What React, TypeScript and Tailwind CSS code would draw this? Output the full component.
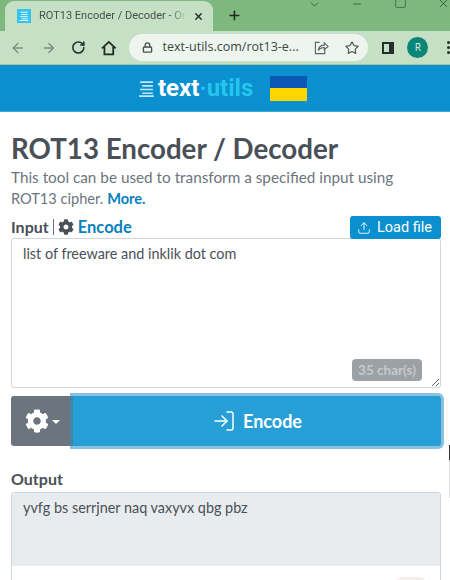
import { ArrowLeft, ArrowRight, RotateCw, Lock, Star, Plus, X, ChevronDown, Minus, Square, Upload, LogIn } from "lucide-react";
import { FaCog } from "react-icons/fa";

const Lines = ({ className }: { className: string }) => (
  <svg viewBox="0 0 16 16" className={className} fill="none" stroke="currentColor" strokeWidth="1.5">
    <path d="M2 2h12M4 5.500h10M2 9h12M4 12.500h10M1 15.200h14" />
  </svg>
);

const ShareIcon = () => (
  <svg viewBox="0 0 16 16" className="w-[15px] h-[15px]" fill="none" stroke="#5f6368" strokeWidth="1.2">
    <path d="M6 2.500H1.500v12h10V10" />
    <path d="M4.500 11c.5-3.500 3-5.500 6.500-5.500V3l4 3.800-4 3.600V8c-2.500 0-5 1-6.500 3z" />
  </svg>
);

const HomeIcon = () => (
  <svg viewBox="0 0 16 16" className="ml-[15px] w-[16px] h-[16px]" fill="none" stroke="#1f2823" strokeWidth="1.800" strokeLinejoin="miter">
    <path d="M1 8.500 8 1.800l7 6.700" />
    <path d="M3.500 7v7.600h9V7" />
  </svg>
);

const App = () => {
  return (
    <div className="w-[450px] h-[580px] overflow-hidden bg-white relative font-['Lato',sans-serif] text-[#495057]">
      {/* Tab strip */}
      <div className="h-[31px] bg-[#7db97c] flex items-end pl-[5px] font-['Roboto',sans-serif]">
        <div className="w-[210px] h-[30px] bg-[#c6e0c5] rounded-t-[9px] flex items-center pl-[12px] pr-[9px]">
          <div className="w-[14px] h-[14px] bg-[#35c4f0] text-[#e8f8ff] flex items-center justify-center shrink-0">
            <Lines className="w-[10px] h-[10px]" />
          </div>
          <span className="ml-[8px] text-[11px] text-[#45524a] whitespace-nowrap overflow-hidden w-[148px] [mask-image:linear-gradient(to_right,black_88%,transparent)]">ROT13 Encoder / Decoder - Online</span>
          <X size={11} strokeWidth={3} className="ml-auto text-[#22282a]" />
        </div>
        <Plus size={15} strokeWidth={2.500} className="ml-[14px] mb-[8px] text-[#1f2a22]" />
        <div className="flex-1 self-start flex items-start text-[#37473a]">
          <ChevronDown size={13} strokeWidth={1.500} className="ml-[66px] -mt-[2px]" />
          <Minus size={12} strokeWidth={1.500} className="ml-[30px] -mt-[2px]" />
          <Square size={13} strokeWidth={1.200} className="ml-[31px] -mt-[4px]" />
          <X size={13} strokeWidth={1.500} className="ml-[30px] -mt-[3px] shrink-0" />
        </div>
      </div>

      {/* Toolbar */}
      <div className="h-[34px] bg-[#c6e0c5] border-b border-[#a5c4a5] flex items-center pl-[10px] font-['Open_Sans',sans-serif]">
        <ArrowLeft size={16} strokeWidth={2} className="text-[#7f8c84]" />
        <ArrowRight size={16} strokeWidth={2} className="ml-[15px] text-[#7f8c84]" />
        <RotateCw size={15} strokeWidth={2.500} className="ml-[15px] text-[#26302a]" />
        <HomeIcon />
        <div className="ml-[12px] w-[239px] h-[27px] rounded-full bg-[#edf5ee] flex items-center pl-[13px] shrink-0">
          <Lock size={11} strokeWidth={3} className="text-[#4a5350]" />
          <span className="ml-[10px] text-[12.500px] text-[#3c4743] whitespace-nowrap">text-utils.com/rot13-e...</span>
          <div className="ml-[15px]"><ShareIcon /></div>
          <Star size={14} strokeWidth={2} className="ml-[16px] text-[#4a5350]" />
        </div>
        <div className="ml-[14px] w-[13px] h-[12px] border-2 border-[#26302a] border-r-[5px]" />
        <div className="ml-[13px] w-[21px] h-[21px] rounded-full bg-[#0b8577] text-[#dff3ee] text-[10px] flex items-center justify-center">R</div>
        <div className="ml-[19px] flex flex-col gap-[2px]">
          <span className="w-[3px] h-[3px] rounded-full bg-[#26302a]" />
          <span className="w-[3px] h-[3px] rounded-full bg-[#26302a]" />
          <span className="w-[3px] h-[3px] rounded-full bg-[#26302a]" />
        </div>
      </div>

      {/* Site header */}
      <div className="h-[47px] bg-[#0a8fcf] border-b border-[#3ba8dc] flex items-center pl-[138px]">
        <Lines className="w-[17px] h-[17px] text-[#c5e6f5]" />
        <span className="ml-[3px] font-['Roboto',sans-serif] font-bold text-[24px] text-white">
          text<span className="text-[#24c6ee]">·utils</span>
        </span>
        <div className="ml-[17px] w-[37px] h-[25px] flex flex-col">
          <div className="flex-1 bg-[#0a57b5]" />
          <div className="flex-1 bg-[#ffd500]" />
        </div>
      </div>

      {/* Page */}
      <div className="pl-[11px] pr-[9px]">
        <h1 className="mt-[19px] text-[27.700px] leading-[36px] font-bold text-[#495057]">ROT13 Encoder / Decoder</h1>
        <p className="text-[15.300px] leading-[21px] text-[#6c757d]">
          This tool can be used to transform a specified input using{" "}
          <span className="text-[14.600px]">ROT13 cipher.</span>{" "}
          <span className="text-[14.600px] font-bold text-[#0a7fbd]">More.</span>
        </p>

        <div className="mt-[7px] flex items-end h-[22px]">
          <span className="font-bold text-[16px] leading-[22px]">Input</span>
          <span className="mx-[4px] w-px h-[16px] bg-[#6c757d] mb-[3px]" />
          <FaCog className="w-[16px] h-[16px] mb-[3px] text-[#495057]" />
          <span className="ml-[4px] font-bold text-[16.500px] leading-[22px] text-[#0a7fbd]">Encode</span>
          <button className="ml-auto w-[91px] h-[23px] -mb-[1px] rounded-[3px] bg-[#0a8fcf] text-white text-[14.500px] flex items-center justify-center pr-[2px] font-['Roboto',sans-serif] relative z-10">
            <Upload size={14} strokeWidth={1.500} />
            <span className="ml-[6px]">Load file</span>
          </button>
        </div>

        <div className="relative h-[150px]">
          <textarea
            readOnly
            defaultValue="list of freeware and inklik dot com"
            className="block w-full h-full resize-y bg-white border border-[#ced4da] rounded-[3px] px-[11px] py-[5px] text-[14.400px] leading-[20px] text-[#495057] outline-none"
          />
          <span className="absolute right-[19px] bottom-[7px] w-[70px] h-[22px] rounded-[4px] bg-[#9ca1a6] text-[#c6c9cc] font-bold text-[13.500px] flex items-center justify-center">35 char(s)</span>
        </div>

        {/* Action row */}
        <div className="mt-[8px] flex h-[50px]">
          <button className="w-[62px] rounded-l-[3px] bg-[#6c757d] text-white flex items-center justify-center">
            <FaCog className="w-[24px] h-[24px]" />
            <span className="ml-[3px] mt-[2px] border-x-[4px] border-x-transparent border-t-[4px] border-t-white" />
          </button>
          <button className="flex-1 rounded-r-[3px] bg-[#269fd6] text-white shadow-[0_0_0_3px_rgba(38,143,200,0.55)] flex items-center justify-center font-bold text-[18px] relative">
            <LogIn size={24} strokeWidth={1.500} />
            <span className="ml-[7px]">Encode</span>
          </button>
        </div>

        <div className="mt-[23px] font-bold text-[16px] leading-[20px]">Output</div>
        <div className="mt-[3px] h-[100px] border border-[#ced4da] rounded-[3px] bg-white">
          <div className="h-[73px] bg-[#e9ecef] px-[11px] py-[5px] text-[14.400px] leading-[20px]">yvfg bs serrjner naq vaxyvx qbg pbz</div>
        </div>
      </div>

      {/* page edge leftovers */}
      <span className="absolute left-[395px] top-[577px] w-[32px] h-[8px] rounded-t-full bg-[#f6eeee]" />
      <span className="absolute left-[449px] top-[445px] w-px h-[15px] bg-[#333333]" />
      <span className="absolute left-[449px] top-[460px] w-px h-[38px] bg-[#dddddd]" />
    </div>
  );
};

export default App;
